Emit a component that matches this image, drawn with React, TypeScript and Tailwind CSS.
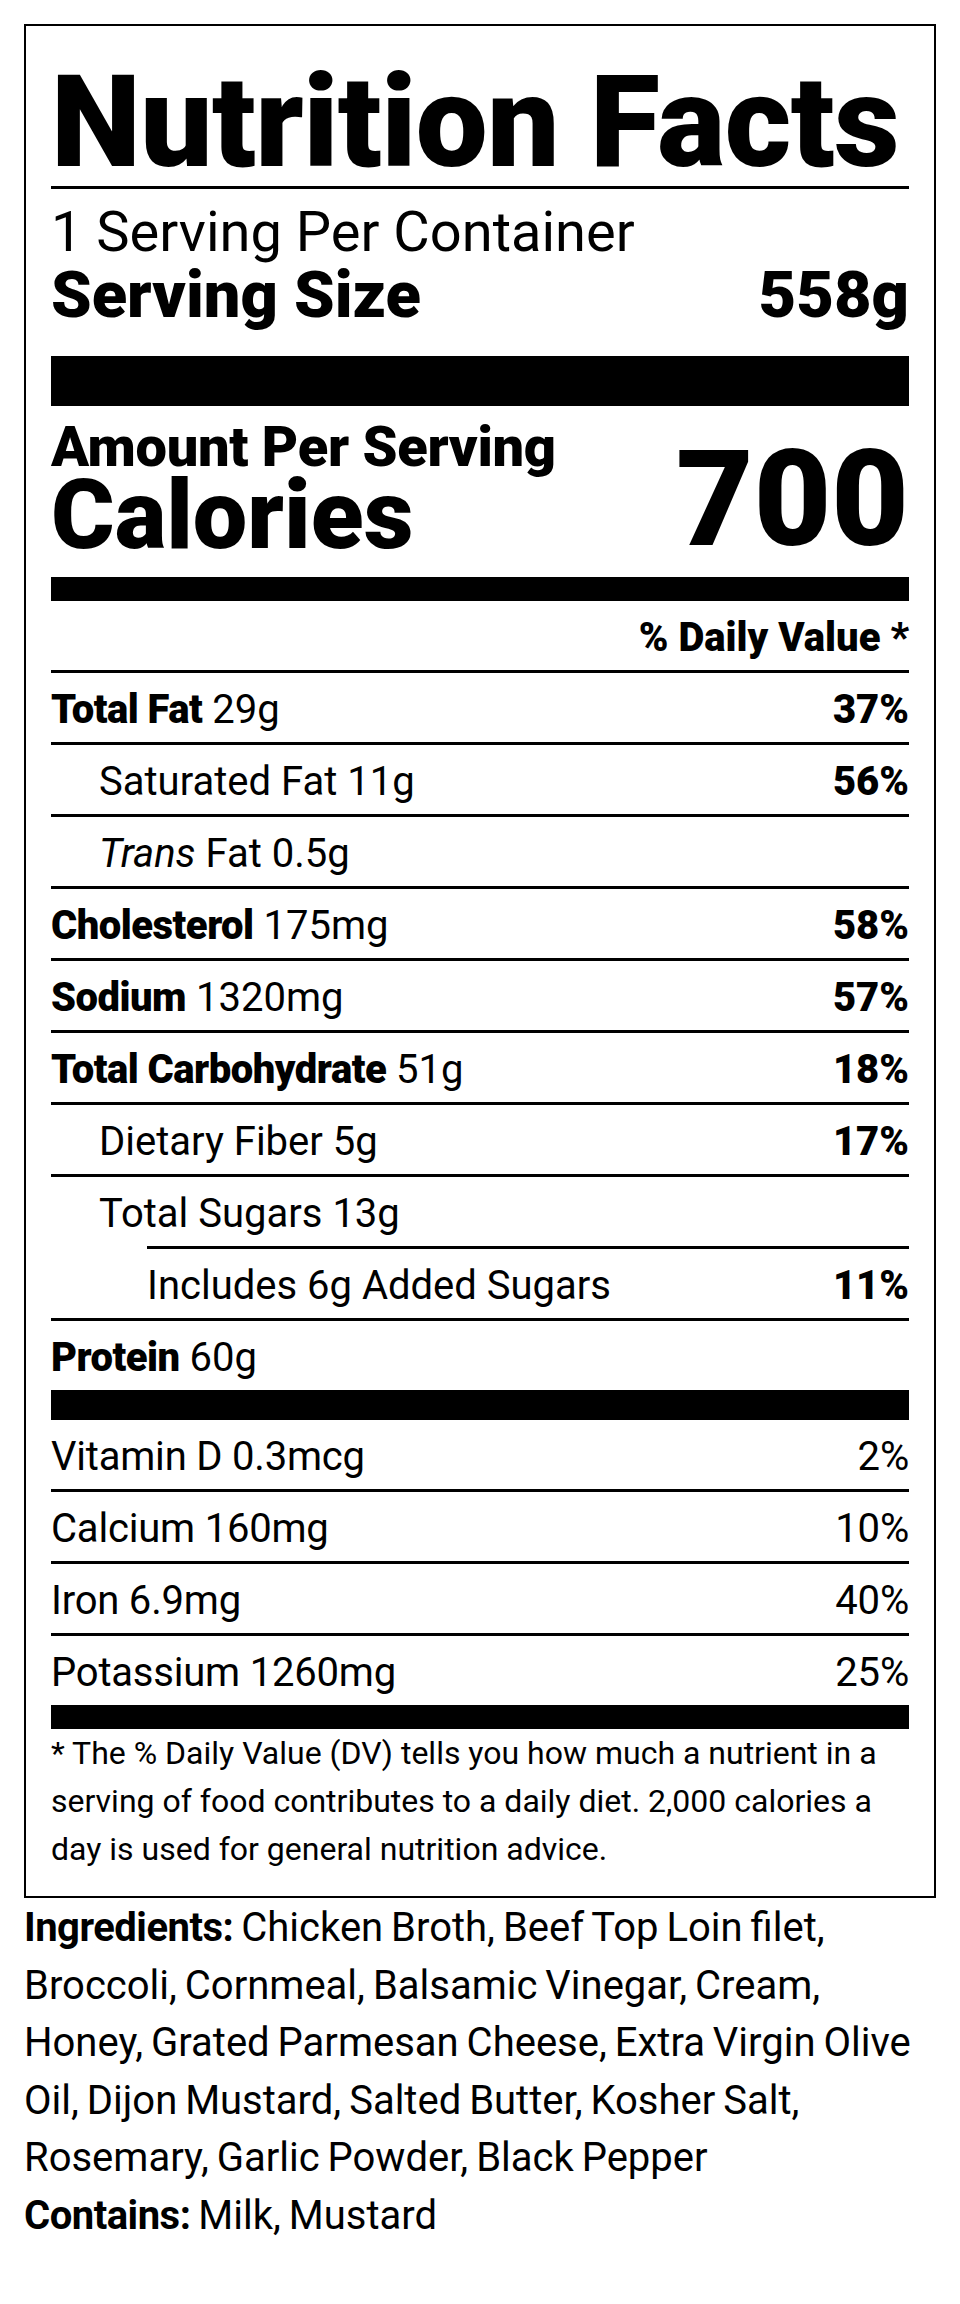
const nutrients = [
  { label: "Total Fat", amount: "29g", dv: "37%", bold: true, indent: 0 },
  { label: "Saturated Fat", amount: "11g", dv: "56%", bold: false, indent: 1 },
  { label: "Trans", amount: "0.5g", dv: "", bold: false, indent: 1, trans: true },
  { label: "Cholesterol", amount: "175mg", dv: "58%", bold: true, indent: 0 },
  { label: "Sodium", amount: "1320mg", dv: "57%", bold: true, indent: 0 },
  { label: "Total Carbohydrate", amount: "51g", dv: "18%", bold: true, indent: 0 },
  { label: "Dietary Fiber", amount: "5g", dv: "17%", bold: false, indent: 1 },
  { label: "Total Sugars", amount: "13g", dv: "", bold: false, indent: 1, shortLine: true },
  { label: "Includes 6g Added Sugars", amount: "", dv: "11%", bold: false, indent: 2 },
];

const vitamins = [
  { label: "Vitamin D 0.3mcg", dv: "2%" },
  { label: "Calcium 160mg", dv: "10%" },
  { label: "Iron 6.9mg", dv: "40%" },
  { label: "Potassium 1260mg", dv: "25%" },
];

const NutrientRow = ({ n }: { n: (typeof nutrients)[number] }) => {
  const pad = n.indent === 2 ? "pl-[96px]" : n.indent === 1 ? "pl-[48px]" : "";
  return (
    <div>
      <div className={`flex h-[69px] items-center justify-between pt-1 ${pad}`}>
        <span>
          {n.trans ? (
            <>
              <i>Trans</i> Fat {n.amount}
            </>
          ) : n.bold ? (
            <>
              <b className="font-black tracking-[-0.5px]">{n.label}</b> {n.amount}
            </>
          ) : (
            <>
              {n.label} {n.amount}
            </>
          )}
        </span>
        <span className="font-black">{n.dv}</span>
      </div>
      <div className={`h-[3px] bg-black ${n.shortLine ? "ml-[96px]" : ""}`} />
    </div>
  );
};

export default function App() {
  return (
    <div className="min-h-screen bg-white p-[24px] font-[Roboto,sans-serif] text-black">
      <div className="border-2 border-black px-[25px] pt-[32px] pb-[23px]">
        <h1 className="text-[128px] font-black leading-none tracking-[-0.6px]">Nutrition Facts</h1>
        <div className="h-[3px] bg-black" />
        <div className="pt-[15px] pb-[31px]">
          <p className="text-[56px] leading-[56px]">1 Serving Per Container</p>
          <div className="mt-[5px] flex justify-between text-[65px] font-black leading-[60px]">
            <span>Serving Size</span>
            <span>558g</span>
          </div>
        </div>
        <div className="h-[50px] bg-black" />

        <div className="flex items-end justify-between pt-[17px] pb-[22px]">
          <div>
            <p className="text-[56px] font-black leading-[48px] tracking-[-0.3px]">Amount Per Serving</p>
            <p className="mt-[4px] text-[97px] font-black leading-[80px]">Calories</p>
          </div>
          <span className="text-[134px] font-black leading-[110px]">700</span>
        </div>
        <div className="h-[24px] bg-black" />

        <div className="text-[40px]">
          <div className="flex h-[69px] items-center justify-end pt-1 font-black">% Daily Value *</div>
          <div className="h-[3px] bg-black" />
          {nutrients.map((n) => (
            <NutrientRow key={n.label} n={n} />
          ))}
          <div className="flex h-[69px] items-center pt-1">
            <span>
              <b className="font-black tracking-[-0.5px]">Protein</b> 60g
            </span>
          </div>
          <div className="h-[30px] bg-black" />
          {vitamins.map((v, i) => (
            <div key={v.label}>
              <div className="flex h-[69px] items-center justify-between pt-1 tracking-[-0.2px]">
                <span>{v.label}</span>
                <span>{v.dv}</span>
              </div>
              {i < vitamins.length - 1 && <div className="h-[3px] bg-black" />}
            </div>
          ))}
        </div>
        <div className="h-[24px] bg-black" />
        <p className="text-[32px] leading-[48px]">
          * The % Daily Value (DV) tells you how much a nutrient in a serving of food contributes to a daily diet. 2,000
          calories a day is used for general nutrition advice.
        </p>
      </div>

      <div className="mt-[1px] text-[40px] leading-[57.6px] [word-spacing:-2px]">
        <p>
          <b className="font-bold tracking-[-0.5px]">Ingredients:</b> Chicken Broth, Beef Top Loin filet, Broccoli,
          Cornmeal, Balsamic Vinegar, Cream, Honey, Grated Parmesan Cheese, Extra Virgin Olive Oil, Dijon Mustard,
          Salted Butter, Kosher Salt, Rosemary, Garlic Powder, Black Pepper
        </p>
        <p>
          <b className="font-bold tracking-[-0.5px]">Contains:</b> Milk, Mustard
        </p>
      </div>
    </div>
  );
}
